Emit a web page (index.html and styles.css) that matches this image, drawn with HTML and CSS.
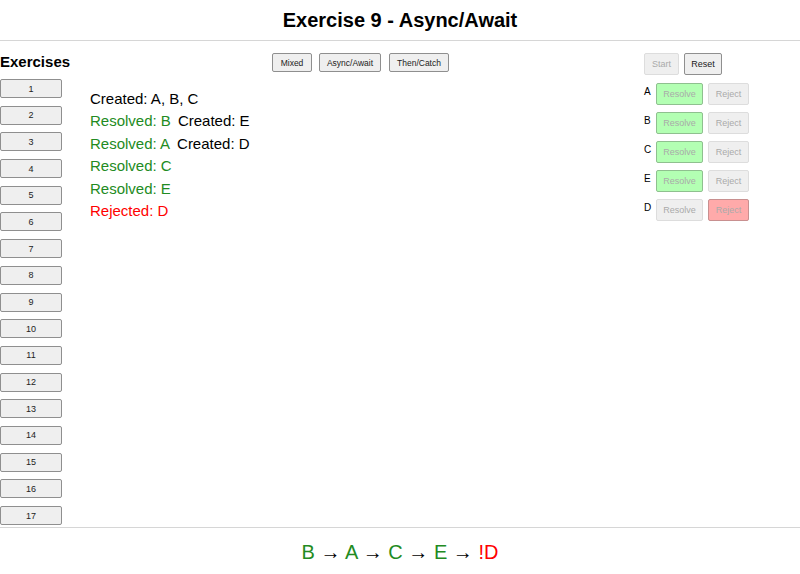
FILE: index.html
```html
<!DOCTYPE html>
<html>
<head>
    <meta charset="UTF-8">
    <title>Exercise 9 - Async/Await</title>
    <link rel="stylesheet" href="styles.css">
</head>
<body>
    <div class="page-title">Exercise 9 - Async/Await</div>
    <div class="main">
        <div class="sidebar">
            <div class="sidebar-title">Exercises</div>
            <div class="exercise-list">
                <button class="ex-btn">1</button>
                <button class="ex-btn">2</button>
                <button class="ex-btn">3</button>
                <button class="ex-btn">4</button>
                <button class="ex-btn">5</button>
                <button class="ex-btn">6</button>
                <button class="ex-btn">7</button>
                <button class="ex-btn">8</button>
                <button class="ex-btn">9</button>
                <button class="ex-btn">10</button>
                <button class="ex-btn">11</button>
                <button class="ex-btn">12</button>
                <button class="ex-btn">13</button>
                <button class="ex-btn">14</button>
                <button class="ex-btn">15</button>
                <button class="ex-btn">16</button>
                <button class="ex-btn">17</button>
            </div>
        </div>
        <div class="content">
            <div class="mode-buttons">
                <button class="mode-btn mixed">Mixed</button>
                <button class="mode-btn async">Async/Await</button>
                <button class="mode-btn then">Then/Catch</button>
            </div>
            <div class="log">
                <div class="log-line"><span class="created">Created: A, B, C</span></div>
                <div class="log-line"><span class="resolved">Resolved: B</span><span class="created">Created: E</span></div>
                <div class="log-line"><span class="resolved">Resolved: A</span><span class="created">Created: D</span></div>
                <div class="log-line"><span class="resolved">Resolved: C</span></div>
                <div class="log-line"><span class="resolved">Resolved: E</span></div>
                <div class="log-line"><span class="rejected">Rejected: D</span></div>
            </div>
        </div>
        <div class="controls">
            <div class="control-top">
                <button class="ctl-btn start" disabled>Start</button>
                <button class="ctl-btn reset">Reset</button>
            </div>
            <div class="promise-row">
                <span class="promise-name">A</span>
                <button class="ctl-btn resolve done" disabled>Resolve</button>
                <button class="ctl-btn reject" disabled>Reject</button>
            </div>
            <div class="promise-row">
                <span class="promise-name">B</span>
                <button class="ctl-btn resolve done" disabled>Resolve</button>
                <button class="ctl-btn reject" disabled>Reject</button>
            </div>
            <div class="promise-row">
                <span class="promise-name">C</span>
                <button class="ctl-btn resolve done" disabled>Resolve</button>
                <button class="ctl-btn reject" disabled>Reject</button>
            </div>
            <div class="promise-row">
                <span class="promise-name">E</span>
                <button class="ctl-btn resolve done" disabled>Resolve</button>
                <button class="ctl-btn reject" disabled>Reject</button>
            </div>
            <div class="promise-row">
                <span class="promise-name">D</span>
                <button class="ctl-btn resolve" disabled>Resolve</button>
                <button class="ctl-btn reject failed" disabled>Reject</button>
            </div>
        </div>
    </div>
    <div class="result">
        <span class="ok">B</span> <span class="arrow">→</span>
        <span class="ok">A</span> <span class="arrow">→</span>
        <span class="ok">C</span> <span class="arrow">→</span>
        <span class="ok">E</span> <span class="arrow">→</span>
        <span class="bad">!D</span>
    </div>
</body>
</html>
```
FILE: styles.css
```css
body {
    font-family: "Liberation Sans", Arial, sans-serif;
    margin: 0;
    padding: 0;
    background-color: #fff;
    color: #000;
}
button {
    font-family: "Liberation Sans", Arial, sans-serif;
    background-color: #efefef;
    border: 1px solid #8f8f8f;
    border-radius: 2px;
    color: #222;
    padding: 0;
    cursor: pointer;
}
.page-title {
    height: 40px;
    line-height: 40px;
    text-align: center;
    font-size: 20px;
    font-weight: bold;
    border-bottom: 1px solid #d6d6d6;
}
.main {
    display: flex;
    height: 486px;
}
.sidebar {
    width: 62px;
}
.sidebar-title {
    font-size: 15px;
    font-weight: bold;
    margin-top: 12px;
    height: 26px;
}
.exercise-list {
    display: flex;
    flex-direction: column;
    gap: 7.7px;
}
.ex-btn {
    width: 62px;
    height: 19px;
    font-size: 9px;
}
.content {
    flex: 1;
    padding-left: 28px;
}
.mode-buttons {
    display: flex;
    margin-top: 12px;
    padding-left: 182px;
}
.mode-btn {
    height: 19px;
    font-size: 8.5px;
}
.mixed {
    width: 40px;
}
.async {
    width: 62px;
    margin-left: 7px;
}
.then {
    width: 60px;
    margin-left: 8px;
}
.log {
    margin-top: 16px;
    font-size: 15px;
}
.log-line {
    height: 22.4px;
    line-height: 22px;
}
.log-line span {
    margin-right: 7px;
}
.created {
    color: #000;
}
.resolved {
    color: #228b22;
}
.rejected {
    color: #f00;
}
.controls {
    width: 156px;
    padding-top: 12px;
}
.control-top {
    display: flex;
    gap: 5px;
    margin-bottom: 8px;
}
.ctl-btn {
    height: 22px;
    font-size: 9px;
}
.start {
    width: 35px;
    color: #aaa;
    border-color: #ddd;
}
.reset {
    width: 38px;
}
.promise-row {
    display: flex;
    align-items: flex-start;
    height: 29px;
}
.promise-name {
    width: 12px;
    font-size: 10px;
    line-height: 18px;
}
.resolve {
    width: 47px;
    height: 22px;
    color: #aaa;
    border-color: #ddd;
}
.reject {
    width: 41px;
    height: 22px;
    margin-left: 5px;
    color: #aaa;
    border-color: #ddd;
}
.resolve.done {
    background-color: #b3ffb3;
    border-color: #8fc08f;
}
.reject.failed {
    background-color: #ffaaaa;
    border-color: #c89090;
}
.result {
    border-top: 1px solid #d6d6d6;
    height: 46px;
    line-height: 48px;
    text-align: center;
    font-size: 20px;
}
.ok {
    color: #228b22;
}
.bad {
    color: #f00;
}
.arrow {
    color: #000;
}
```
